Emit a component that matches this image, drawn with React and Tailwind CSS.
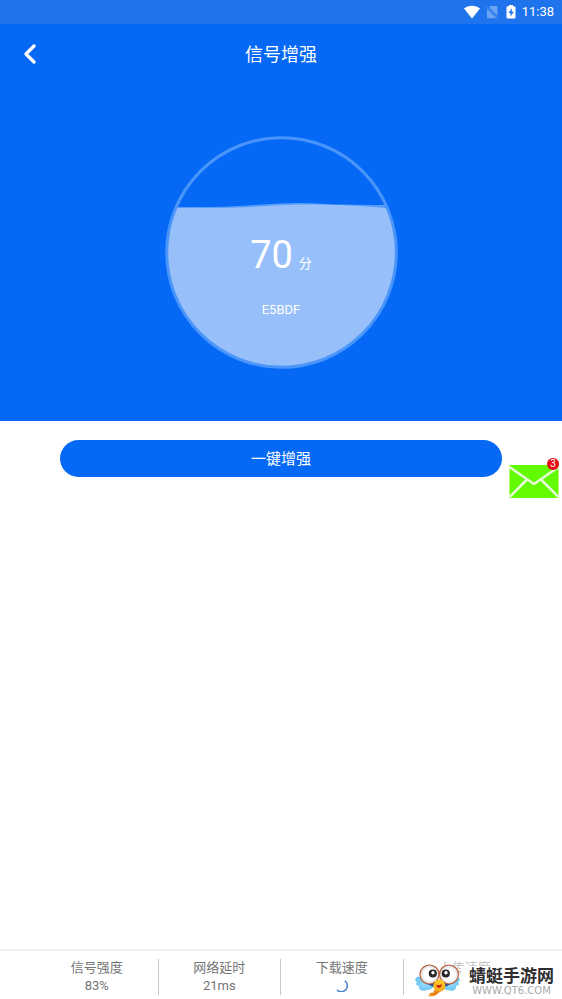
const stats = [
  { label: "信号强度", value: "83%" },
  { label: "网络延时", value: "21ms" },
  { label: "下载速度", loading: true },
  { label: "上传速度" },
]

function StatusBar() {
  return (
    <div className="flex h-6 items-center justify-end bg-[#1f73ec] pr-2 text-white">
      <svg className="mr-[6px] h-4 w-4" viewBox="0 0 16 16" fill="currentColor">
        <path d="M0 4.6C4.6.8 11.4.8 16 4.6L8 14.4z" />
      </svg>
      <svg className="mr-2 h-4 w-3 opacity-35" viewBox="0 0 12 16" fill="currentColor">
        <path d="M4.6 2H10q1.400 0 1.400 1.400v8.600L3.400 3.500z" />
        <path d="M1 4.900L10.400 14.200H2.200Q1 14.200 1 12.900z" />
        <path d="M.3 2.800l11.400 11.600" stroke="currentColor" strokeWidth=".8" />
      </svg>
      <svg className="mr-[6px] h-4 w-[10px]" viewBox="0 0 10 16" fill="currentColor">
        <path
          fillRule="evenodd"
          d="M3 .9h4v1.400h1.300q1.200 0 1.200 1.200v9.800q0 1.200-1.200 1.200H1.700q-1.200 0-1.200-1.200V3.500q0-1.200 1.200-1.200H3zM6 4.300L2.300 9h2.200v3.600L7.900 7.700H5.700z"
        />
      </svg>
      <span className="text-[13px] leading-6">11:38</span>
    </div>
  )
}

function Gauge() {
  return (
    <div className="relative mx-auto h-[233px] w-[233px]">
      <svg className="absolute inset-0 h-full w-full" viewBox="0 0 233 233" fill="none">
        <clipPath id="bowl">
          <circle cx="116.500" cy="116.500" r="115" />
        </clipPath>
        <g clipPath="url(#bowl)">
          <path d="M0 71Q50 72 90 69T150 67.500T233 69V233H0z" fill="#5a9ffb" />
          <path d="M0 71.500C60 72.500 80 71.500 110 69.500S180 68 233 73V233H0z" fill="#97c0fb" />
        </g>
        <circle cx="116.500" cy="116.500" r="114.800" stroke="#4a95fa" strokeWidth="3" />
      </svg>
      <div className="relative flex flex-col items-center pt-24 text-white">
        <p className="flex items-baseline gap-[6px]">
          <span className="text-[38px] leading-[46px]">70</span>
          <span className="text-[13px]">分</span>
        </p>
        <p className="mt-[22px] text-[13px] leading-5">E5BDF</p>
      </div>
    </div>
  )
}

function MailButton() {
  return (
    <button type="button" aria-label="邮件" className="absolute top-[37px] right-[3px] h-10 w-[50px]">
      <svg className="h-full w-full" viewBox="0 0 50 40" fill="none">
        <rect x=".5" y="7" width="49" height="33" fill="#62fb02" />
        <path
          d="M.5 9L25 26 49.500 9M.5 39L17.500 22M49.500 39L32.500 22"
          stroke="#e6fbd5"
          strokeWidth="2.600"
        />
      </svg>
      <span className="absolute top-0 right-0 h-3 w-3 rounded-full bg-[#e60c14] text-[10px] leading-3 text-white">
        3
      </span>
    </button>
  )
}

function Spinner() {
  return (
    <svg className="my-[3px] h-3 w-3" viewBox="0 0 12 12" fill="none">
      <path d="M9.200 1.200A5.200 5.200 0 0 1 1.600 10.300" stroke="#4b83d3" strokeWidth="1.500" strokeLinecap="round" />
    </svg>
  )
}

function Dragonfly() {
  return (
    <svg className="h-[36px] w-[46px] shrink-0" viewBox="0 0 46 36">
      <defs>
        <radialGradient id="wing">
          <stop offset="0" stopColor="#9bdcfa" />
          <stop offset="1" stopColor="#6cc5f3" />
        </radialGradient>
        <linearGradient id="body" x2="0" y2="1">
          <stop offset="0" stopColor="#ffcf24" />
          <stop offset="1" stopColor="#f18a1d" />
        </linearGradient>
        <radialGradient id="eye">
          <stop offset=".6" stopColor="#fff" />
          <stop offset="1" stopColor="#d3d7dd" />
        </radialGradient>
      </defs>
      <path d="M8 14C1 12-2 17 2 19c-2 2 0 4 2 4-1 4 4 6 8 4q5 0 8-5z" fill="url(#wing)" />
      <path d="M37 14c7-2 10 3 6 5 2 2 0 4-2 4 1 4-4 6-8 4q-5 0-8-5z" fill="url(#wing)" />
      <path d="M12 21l7 3 1-4zM36 21l-6 3-2-4z" fill="#234b91" />
      <path d="M19 20q5-3 11 0 2 8-6 9-2 5-11 4c2-1 2-2 1-3 3 1 5-1 6-3q-3-3-1-7z" fill="url(#body)" />
      <path d="M18.500 27.500q2 2.500 6 1.500M15.500 30q3 2 6 .5" stroke="#dc6b18" strokeWidth="1" fill="none" />
      <circle cx="14.500" cy="11.500" r="9.500" fill="url(#eye)" stroke="#b9603c" strokeWidth="1.200" />
      <circle cx="34" cy="11.500" r="9.500" fill="url(#eye)" stroke="#b9603c" strokeWidth="1.200" />
      <circle cx="17.800" cy="10.500" r="4.100" fill="#292525" />
      <circle cx="30.800" cy="10.500" r="4.100" fill="#292525" />
      <circle cx="18" cy="9.800" r="1.700" fill="#fff" />
      <circle cx="31" cy="9.800" r="1.700" fill="#fff" />
      <path d="M19.500 18.500q5-4 9.500 0 1 4-4 4.500-5 0-5.500-4.500z" fill="#ffc421" />
      <path d="M21 21.500q3.500 1.500 6-.5-.5 3.500-3 4-2.500-1-3-3.500z" fill="#c91c17" />
    </svg>
  )
}

function SiteBadge() {
  return (
    <div className="absolute right-2 bottom-0 flex items-end">
      <Dragonfly />
      <div className="bg-white pl-2 text-center">
        <p className="text-[17px] leading-5 font-bold text-[#302e30]">蜻蜓手游网</p>
        <p className="pb-[3px] font-['DejaVu_Sans',sans-serif] text-[10px] leading-[10px] text-[#aaa]">WWW.QT6.COM</p>
      </div>
    </div>
  )
}

export default function App() {
  return (
    <div className="flex min-h-screen flex-col bg-white font-[Roboto,'Noto_Sans_CJK_SC',sans-serif]">
      <StatusBar />
      <header className="bg-[#0569f5] pb-[52px] text-white">
        <div className="grid h-[60px] grid-cols-[60px_1fr_60px] items-center">
          <button type="button" aria-label="返回" className="flex h-full items-center justify-center">
            <svg className="h-5 w-3" viewBox="0 0 12 20" fill="none">
              <path d="M10 2L2 10l8 8" stroke="currentColor" strokeWidth="3.200" strokeLinecap="round" strokeLinejoin="round" />
            </svg>
          </button>
          <h1 className="pt-[2px] text-center text-[18px] leading-6">信号增强</h1>
        </div>
        <div className="pt-[52px]">
          <Gauge />
        </div>
      </header>
      <main className="relative flex-1 px-[60px] pt-[19px]">
        <button type="button" className="h-[37px] w-full rounded-full bg-[#0569f5] pt-[2px] text-[15px] text-white">
          一键增强
        </button>
        <MailButton />
      </main>
      <footer className="relative border-t-2 border-[#f0f0f0] px-9 pt-2 pb-1">
        <dl className="grid grid-cols-4 divide-x divide-[#c8c8c8] text-[13px] leading-[18px] text-[#757575]">
          {stats.map((stat) => (
            <div key={stat.label} className="flex flex-col items-center last:text-[#c4c4c4]">
              <dt>{stat.label}</dt>
              <dd>{stat.loading ? <Spinner /> : stat.value}</dd>
            </div>
          ))}
        </dl>
        <SiteBadge />
      </footer>
    </div>
  )
}
